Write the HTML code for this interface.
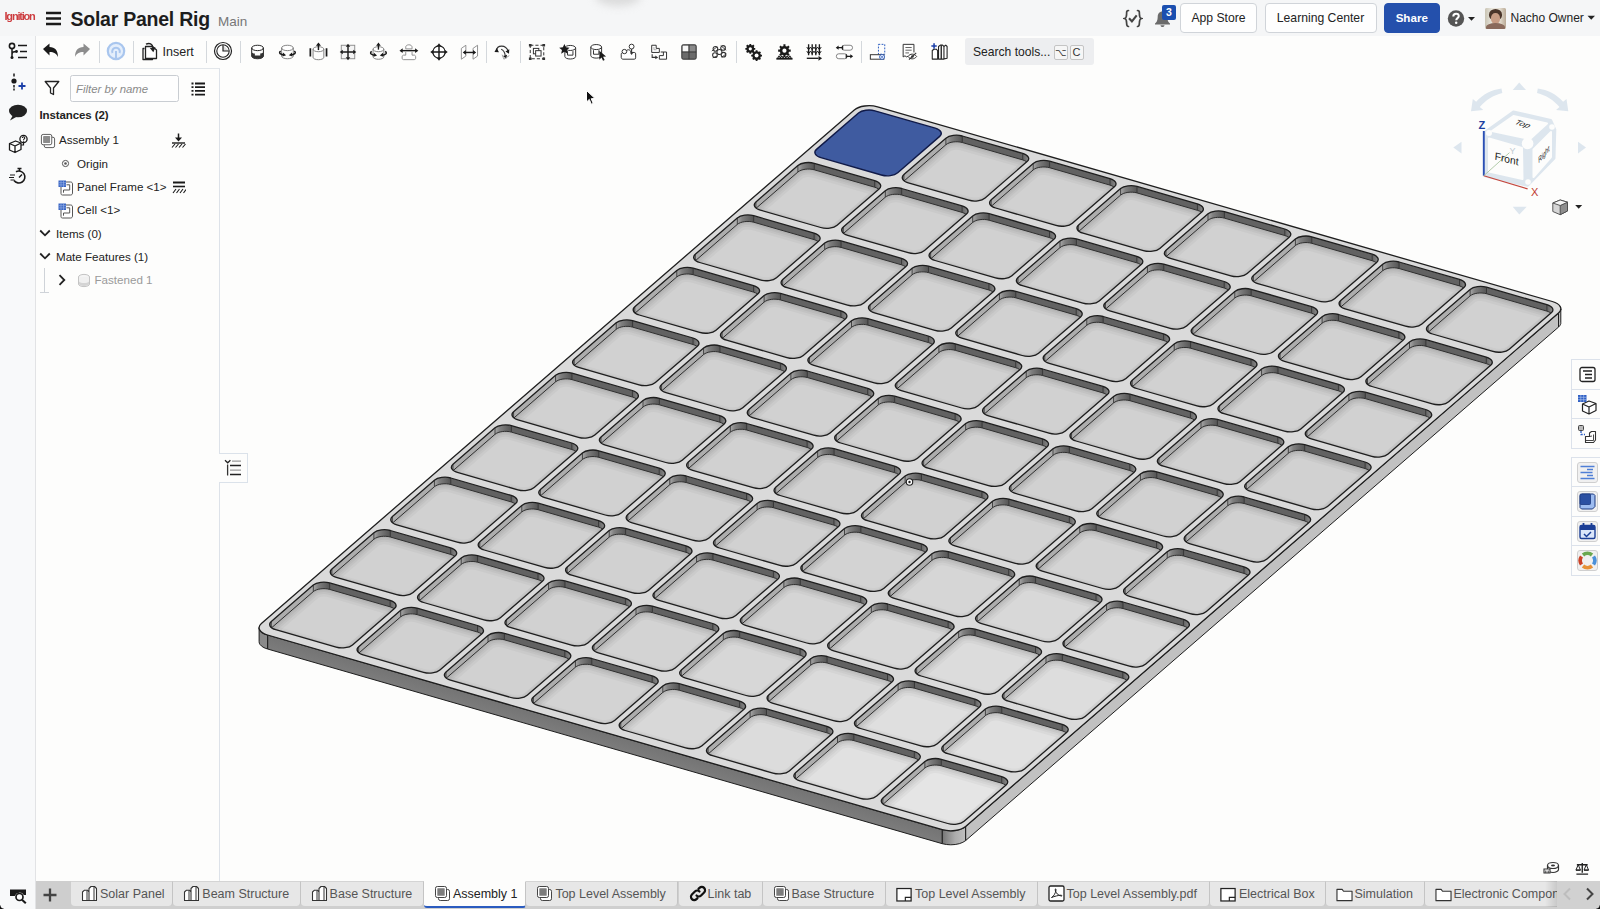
<!DOCTYPE html>
<html lang="en">
<head>
<meta charset="utf-8">
<title>Solar Panel Rig</title>
<style>
*{box-sizing:border-box}
html,body{margin:0;padding:0}
body{width:1600px;height:909px;overflow:hidden;background:#fdfdfc;font-family:"Liberation Sans",sans-serif;color:#222;position:relative}
.abs{position:absolute}
#hdr{position:absolute;left:0;top:0;width:1600px;height:36px;background:#f5f6f7}
#lcol{position:absolute;left:0;top:36px;width:36px;height:873px;background:#f8f9fa;border-right:1px solid #e2e3e5}
#tbar{position:absolute;left:36px;top:36px;width:1564px;height:32px;background:#fdfdfc}
#fpanel{position:absolute;left:36px;top:68px;width:184px;height:813px;background:#fdfdfc;border-right:1px solid #dde2e9;border-top:1px solid #e2e6ea}
#tabs{position:absolute;left:36px;top:881px;width:1564px;height:28px;background:#cecece}
.t{position:absolute;white-space:nowrap;line-height:1}
.btn{position:absolute;top:3px;height:29.5px;border:1px solid #d0d4d9;border-radius:4px;background:#fefefe;font-size:12.2px;line-height:28px;text-align:center;color:#222}
.tab{position:absolute;top:0;height:25px;background:#e7e7e7;border-radius:0 0 4px 4px;border-right:1px solid #c4c4c4;border-top:1px solid #d4d4d4;font-size:12.5px;color:#555;line-height:25px;white-space:nowrap;overflow:hidden}
.tab svg{position:absolute;left:10px;top:3px}
.tab span{position:absolute;left:29px;top:0}
.sep{position:absolute;top:41px;width:1px;height:22px;background:#d4d8dc}
.ico{position:absolute}
.row{position:absolute;font-size:11.6px;line-height:14px;white-space:nowrap;color:#222}
.rbox{position:absolute;left:1571px;width:30px;background:#fdfdfc;border:1px solid #dce2eb}
.rbox div{height:29.6px;border-bottom:1px solid #dce2eb;position:relative}
</style>
</head>
<body>
<div id="hdr">
  <div class="abs" style="left:595px;top:-14px;width:46px;height:20px;border-radius:50%;background:#d2d2d2;filter:blur(4px);opacity:.75"></div>
  <div class="t" style="left:4.5px;top:10.4px;font-size:11px;font-weight:bold;color:#cd3d40;letter-spacing:-1.2px;transform:scaleY(1.06);transform-origin:0 0">Ignition</div>
  <svg class="ico" style="left:46px;top:11px" width="16" height="15" viewBox="0 0 16 15"><path d="M0 2h15M0 7.5h15M0 13h15" stroke="#1a1a1a" stroke-width="2.3"/></svg>
  <div class="t" style="left:70.5px;top:9.5px;font-size:19.5px;font-weight:bold;color:#1d1d1d;letter-spacing:-0.25px">Solar Panel Rig</div>
  <div class="t" style="left:218px;top:14.5px;font-size:13.5px;color:#777">Main</div>

  <svg class="ico" style="left:1123px;top:9px" width="20" height="19" viewBox="0 0 20 19"><path d="M5.5 1.5C3.5 1.5 3.6 3 3.6 5c0 2.5-.2 4-2 4.5 1.8.5 2 2 2 4.5 0 2 0 3.5 1.9 3.5M14.5 1.5c2 0 1.9 1.5 1.9 3.5 0 2.5.2 4 2 4.5-1.8.5-2 2-2 4.5 0 2 0 3.5-1.9 3.5" fill="none" stroke="#444" stroke-width="1.7" stroke-linecap="round"/><path d="M6 9.3l2.900 3 4.800-6" fill="none" stroke="#444" stroke-width="2.1"/></svg>
  <svg class="ico" style="left:1154px;top:11px" width="17" height="16" viewBox="0 0 17 16"><path d="M8.5 0.5c3.3 0 4.8 2.4 4.8 5.5 0 3.5 1.2 5.5 2.7 6.5v1h-15v-1c1.5-1 2.7-3 2.7-6.5 0-3.1 1.5-5.5 4.8-5.5zM6.5 14.2h4c0 1-.9 1.8-2 1.8s-2-.8-2-1.8z" fill="#6b6b6b"/></svg>
  <div class="abs" style="left:1162px;top:5px;width:14px;height:14.5px;background:#1b4fb0;border-radius:2px;color:#fff;font-size:10.5px;font-weight:bold;text-align:center;line-height:14px">3</div>
  <div class="btn" style="left:1180px;width:77px">App Store</div>
  <div class="btn" style="left:1264.5px;width:112px">Learning Center</div>
  <div class="btn" style="left:1384px;width:55.5px;background:#2450ac;border-color:#2450ac;color:#fff;font-weight:bold;font-size:11.6px">Share</div>
  <svg class="ico" style="left:1447px;top:9px" width="32" height="19" viewBox="0 0 32 19"><circle cx="9" cy="9.5" r="8.2" fill="#555"/><path d="M6.3 7.4c0-1.7 1.2-2.7 2.8-2.7s2.7 1 2.7 2.4c0 2-2.6 2.1-2.6 4.1" fill="none" stroke="#fff" stroke-width="2"/><circle cx="9.2" cy="13.8" r="1.250" fill="#fff"/><path d="M21 8h7l-3.5 3.8z" fill="#222"/></svg>
  <div class="abs" style="left:1484.5px;top:8px;width:21px;height:21px;border-radius:2px;overflow:hidden;background:#d9d3c4">
    <div class="abs" style="left:0;top:0;width:21px;height:21px;background:linear-gradient(90deg,#c9c4b4,#ebe8df 35%,#e4ddd0 70%,#b9a995)"></div>
    <div class="abs" style="left:4px;top:1px;width:13px;height:11px;border-radius:50% 50% 40% 40%;background:#4a352a"></div>
    <div class="abs" style="left:6px;top:5px;width:9.5px;height:11px;border-radius:45%;background:#c79c84"></div>
    <div class="abs" style="left:1px;top:15px;width:19px;height:8px;border-radius:50% 50% 0 0;background:#8a6a5c"></div>
  </div>
  <div class="t" style="left:1510.5px;top:12px;font-size:12px;color:#222">Nacho Owner</div>
  <svg class="ico" style="left:1587px;top:15px" width="9" height="6" viewBox="0 0 9 6"><path d="M0.5 0.8h7.5l-3.750 4z" fill="#222"/></svg>
</div>
<div id="lcol"></div>
<div id="tbar"></div>
<div id="fpanel"></div>
<svg id="panel" width="1600" height="909" viewBox="0 0 1600 909" style="position:absolute;left:0;top:0">
<defs>
<linearGradient id="gFront" gradientUnits="userSpaceOnUse" x1="0" y1="0" x2="0" y2="15" gradientTransform="matrix(1 0.2884 0 1 0 555)"><stop offset="0" stop-color="#727272"/><stop offset="1" stop-color="#7b7b7b"/></linearGradient>
<linearGradient id="gBC" gradientUnits="userSpaceOnUse" x1="942" y1="0" x2="968" y2="0"><stop offset="0" stop-color="#747474"/><stop offset="0.5" stop-color="#acacac"/><stop offset="1" stop-color="#c4c4c4"/></linearGradient>
<linearGradient id="gTC"><stop offset="0" stop-color="#a8a8a8"/><stop offset=".3" stop-color="#808080"/><stop offset="1" stop-color="#545454"/></linearGradient>
<linearGradient id="gRC"><stop offset="0" stop-color="#626262"/><stop offset="1" stop-color="#8c8c8c"/></linearGradient>
<linearGradient id="gLC"><stop offset="0" stop-color="#8e8e8e"/><stop offset="1" stop-color="#b4b4b4"/></linearGradient>
<linearGradient id="gDW" x1="0" y1="0" x2="0" y2="1"><stop offset="0" stop-color="#575757"/><stop offset="1" stop-color="#6d6d6d"/></linearGradient>
<path id="rim" d="M10.2 6.7L70.6 24.1C76.3 25.8 78.3 29.5 75.0 32.3L33.0 68.7C29.6 71.6 22.3 72.6 16.6 70.9L-43.8 53.5C-49.6 51.9 -51.5 48.2 -48.2 45.3L-6.2 8.9C-2.9 6.1 4.5 5.1 10.2 6.7Z"/>
<clipPath id="cr"><use href="#rim"/></clipPath>
<clipPath id="cf"><use href="#rim" y="6.5"/></clipPath>
<g id="cell"><g clip-path="url(#cr)"><use href="#rim" fill="#626262"/><path d="M-6.2 8.9L-4.3 7.7L-1.8 6.7L1.1 6.1L4.2 5.9L7.3 6.1L10.2 6.7L10.2 14.2L7.3 13.6L4.2 13.4L1.1 13.6L-1.8 14.2L-4.3 15.2L-6.2 16.4Z" fill="url(#gTC)"/><path d="M-53.0 49.5L-6.2 8.9L-6.2 16.4L-53.0 57.0Z" fill="#adadad"/><path d="M-48.2 45.3L-49.4 46.8L-49.8 48.3L-49.4 49.9L-48.2 51.3L-46.3 52.6L-43.8 53.5L-43.8 61.0L-46.3 60.1L-48.2 58.8L-49.4 57.4L-49.8 55.8L-49.4 54.3L-48.2 52.8Z" fill="url(#gLC)"/><path d="M70.6 24.1L73.1 25.1L75.0 26.3L76.2 27.8L76.6 29.3L76.2 30.9L75.0 32.3L75.0 39.8L76.2 38.4L76.6 36.8L76.2 35.3L75.0 33.8L73.1 32.6L70.6 31.6Z" fill="url(#gRC)"/><use href="#rim" y="6.5" stroke="#333" stroke-width="1"/><g clip-path="url(#cf)" fill="none" stroke="#000"><use href="#rim" y="6.5" stroke-width="16" stroke-opacity="0.03"/><use href="#rim" y="6.5" stroke-width="11" stroke-opacity="0.035"/><use href="#rim" y="6.5" stroke-width="7" stroke-opacity="0.04"/><use href="#rim" y="6.5" stroke-width="3.5" stroke-opacity="0.04"/><use href="#rim" stroke-width="7" stroke-opacity="0.025"/><use href="#rim" stroke-width="3" stroke-opacity="0.03"/></g><path d="M-6.2 8.9 v6.5M10.2 6.7 v6.5M70.6 24.1 v6.5M-48.2 45.3 v6.5" stroke="#2e2e2e" stroke-width="0.8" fill="none"/></g><use href="#rim" fill="none" stroke="#1e1e1e" stroke-width="1.3"/></g>
</defs>
<path d="M267.6 635.0L942.3 829.7L942.3 843.7L267.6 649.0Z" fill="url(#gFront)" stroke="#1e1e1e" stroke-width="1" stroke-linejoin="round"/>
<path d="M965.6 826.6L1558.5 313.1L1558.5 327.1L965.6 840.6Z" fill="#c1c1c1" stroke="#1e1e1e" stroke-width="1" stroke-linejoin="round"/>
<path d="M942.3 829.7L946.4 830.5L950.8 830.8L955.2 830.5L959.3 829.7L962.9 828.3L965.6 826.6L965.6 840.6L962.9 842.3L959.3 843.7L955.2 844.5L950.8 844.8L946.4 844.5L942.3 843.7Z" fill="url(#gBC)" stroke="#1e1e1e" stroke-width="1" stroke-linejoin="round"/>
<path d="M259.1 627.7L259.3 629.2L260.1 630.6L261.4 631.9L263.1 633.2L265.2 634.2L267.6 635.0L267.6 649.0L265.2 648.2L263.1 647.2L261.4 645.9L260.1 644.6L259.3 643.2L259.1 641.7Z" fill="#8a8a8a" stroke="#1e1e1e" stroke-width="1" stroke-linejoin="round"/>
<path d="M1558.5 313.1L1559.2 312.4L1559.8 311.7L1560.2 311.0L1560.6 310.3L1560.8 309.5L1560.8 308.8L1560.8 322.8L1560.8 323.5L1560.6 324.3L1560.2 325.0L1559.8 325.7L1559.2 326.4L1558.5 327.1Z" fill="#bbbbbb" stroke="#1e1e1e" stroke-width="1" stroke-linejoin="round"/>
<path d="M877.6 106.8L1552.3 301.5C1560.5 303.8 1563.2 309.0 1558.5 313.1L965.6 826.6C960.9 830.6 950.5 832.0 942.3 829.7L267.6 635.0C259.4 632.7 256.7 627.5 261.4 623.4L854.3 109.9C859.0 105.9 869.4 104.5 877.6 106.8Z" fill="#dadada" stroke="#1e1e1e" stroke-width="1.3"/>
<use href="#rim" x="864.7" y="104.1" fill="#3f5ba0" stroke="#101a48" stroke-width="1.4"/>
<use href="#cell" x="952.1" y="129.3" fill="#d1d1d1"/>
<use href="#cell" x="1039.4" y="154.5" fill="#d1d1d1"/>
<use href="#cell" x="1126.8" y="179.7" fill="#d1d1d1"/>
<use href="#cell" x="1214.2" y="204.9" fill="#d1d1d1"/>
<use href="#cell" x="1301.6" y="230.1" fill="#d1d1d1"/>
<use href="#cell" x="1388.9" y="255.3" fill="#d1d1d1"/>
<use href="#cell" x="1476.3" y="280.5" fill="#d1d1d1"/>
<use href="#cell" x="804.1" y="156.6" fill="#d1d1d1"/>
<use href="#cell" x="891.5" y="181.8" fill="#d1d1d1"/>
<use href="#cell" x="978.9" y="207.0" fill="#d1d1d1"/>
<use href="#cell" x="1066.2" y="232.2" fill="#d1d1d1"/>
<use href="#cell" x="1153.6" y="257.4" fill="#d1d1d1"/>
<use href="#cell" x="1241.0" y="282.6" fill="#d1d1d1"/>
<use href="#cell" x="1328.3" y="307.8" fill="#d1d1d1"/>
<use href="#cell" x="1415.7" y="333.0" fill="#d1d1d1"/>
<use href="#cell" x="743.5" y="209.0" fill="#d1d1d1"/>
<use href="#cell" x="830.9" y="234.2" fill="#d1d1d1"/>
<use href="#cell" x="918.3" y="259.4" fill="#d1d1d1"/>
<use href="#cell" x="1005.6" y="284.6" fill="#d1d1d1"/>
<use href="#cell" x="1093.0" y="309.8" fill="#d1d1d1"/>
<use href="#cell" x="1180.4" y="335.0" fill="#d1d1d1"/>
<use href="#cell" x="1267.8" y="360.2" fill="#d1d1d1"/>
<use href="#cell" x="1355.1" y="385.4" fill="#d1d1d1"/>
<use href="#cell" x="683.0" y="261.5" fill="#d1d1d1"/>
<use href="#cell" x="770.3" y="286.7" fill="#d1d1d1"/>
<use href="#cell" x="857.7" y="311.9" fill="#d1d1d1"/>
<use href="#cell" x="945.1" y="337.1" fill="#d1d1d1"/>
<use href="#cell" x="1032.4" y="362.3" fill="#d1d1d1"/>
<use href="#cell" x="1119.8" y="387.5" fill="#d1d1d1"/>
<use href="#cell" x="1207.2" y="412.7" fill="#d1d1d1"/>
<use href="#cell" x="1294.5" y="437.9" fill="#d1d1d1"/>
<use href="#cell" x="622.4" y="313.9" fill="#d1d1d1"/>
<use href="#cell" x="709.8" y="339.1" fill="#d1d1d1"/>
<use href="#cell" x="797.1" y="364.3" fill="#d1d1d1"/>
<use href="#cell" x="884.5" y="389.5" fill="#d1d1d1"/>
<use href="#cell" x="971.9" y="414.7" fill="#d1d1d1"/>
<use href="#cell" x="1059.2" y="439.9" fill="#d1d1d1"/>
<use href="#cell" x="1146.6" y="465.1" fill="#d1d1d1"/>
<use href="#cell" x="1234.0" y="490.3" fill="#d1d1d1"/>
<use href="#cell" x="561.8" y="366.4" fill="#d1d1d1"/>
<use href="#cell" x="649.2" y="391.6" fill="#d1d1d1"/>
<use href="#cell" x="736.5" y="416.8" fill="#d1d1d1"/>
<use href="#cell" x="823.9" y="442.0" fill="#d1d1d1"/>
<use href="#cell" x="911.3" y="467.2" fill="#d1d1d1"/>
<use href="#cell" x="998.7" y="492.4" fill="#d3d3d3"/>
<use href="#cell" x="1086.0" y="517.6" fill="#d4d4d4"/>
<use href="#cell" x="1173.4" y="542.8" fill="#d5d5d5"/>
<use href="#cell" x="501.2" y="418.9" fill="#d1d1d1"/>
<use href="#cell" x="588.6" y="444.1" fill="#d1d1d1"/>
<use href="#cell" x="676.0" y="469.3" fill="#d1d1d1"/>
<use href="#cell" x="763.3" y="494.5" fill="#d1d1d1"/>
<use href="#cell" x="850.7" y="519.7" fill="#d3d3d3"/>
<use href="#cell" x="938.1" y="544.9" fill="#d6d6d6"/>
<use href="#cell" x="1025.4" y="570.1" fill="#d8d8d8"/>
<use href="#cell" x="1112.8" y="595.3" fill="#d9d9d9"/>
<use href="#cell" x="440.6" y="471.3" fill="#d1d1d1"/>
<use href="#cell" x="528.0" y="496.5" fill="#d1d1d1"/>
<use href="#cell" x="615.4" y="521.7" fill="#d1d1d1"/>
<use href="#cell" x="702.8" y="546.9" fill="#d2d2d2"/>
<use href="#cell" x="790.1" y="572.1" fill="#d5d5d5"/>
<use href="#cell" x="877.5" y="597.3" fill="#d9d9d9"/>
<use href="#cell" x="964.9" y="622.5" fill="#dcdcdc"/>
<use href="#cell" x="1052.2" y="647.7" fill="#dddddd"/>
<use href="#cell" x="380.1" y="523.8" fill="#d1d1d1"/>
<use href="#cell" x="467.4" y="549.0" fill="#d1d1d1"/>
<use href="#cell" x="554.8" y="574.2" fill="#d1d1d1"/>
<use href="#cell" x="642.2" y="599.4" fill="#d3d3d3"/>
<use href="#cell" x="729.5" y="624.6" fill="#d7d7d7"/>
<use href="#cell" x="816.9" y="649.8" fill="#dbdbdb"/>
<use href="#cell" x="904.3" y="675.0" fill="#dfdfdf"/>
<use href="#cell" x="991.6" y="700.2" fill="#e1e1e1"/>
<use href="#cell" x="319.5" y="576.2" fill="#d1d1d1"/>
<use href="#cell" x="406.9" y="601.4" fill="#d1d1d1"/>
<use href="#cell" x="494.2" y="626.6" fill="#d1d1d1"/>
<use href="#cell" x="581.6" y="651.8" fill="#d3d3d3"/>
<use href="#cell" x="669.0" y="677.0" fill="#d8d8d8"/>
<use href="#cell" x="756.3" y="702.2" fill="#dcdcdc"/>
<use href="#cell" x="843.7" y="727.4" fill="#e1e1e1"/>
<use href="#cell" x="931.1" y="752.6" fill="#e5e5e5"/>
<circle cx="909.5" cy="482" r="3.2" fill="#fff" stroke="#222" stroke-width="1.1"/><circle cx="909.5" cy="482" r="1.2" fill="#222"/>
</svg><!-- left column icons -->
<svg class="ico" style="left:8px;top:42px" width="20" height="19" viewBox="0 0 20 19"><circle cx="4" cy="4" r="2.6" fill="#fff" stroke="#1a1a1a" stroke-width="1.6"/><circle cx="4" cy="15.5" r="1.5" fill="#1a1a1a"/><path d="M4 6.5v9M4 13c0-3 1-3.5 4.5-3.5" fill="none" stroke="#1a1a1a" stroke-width="1.5"/><circle cx="8.5" cy="9.5" r="1.4" fill="#1a1a1a"/><path d="M10 3.5h9M12 9.5h7M10 15.5h9" stroke="#1a1a1a" stroke-width="1.7"/></svg>
<svg class="ico" style="left:9px;top:73px" width="20" height="19" viewBox="0 0 20 19"><path d="M5 0.5v3M5 12v2.5M5 15.5v2" stroke="#1a1a1a" stroke-width="1.5"/><circle cx="5" cy="8" r="2.6" fill="#1a1a1a"/><path d="M9.5 13h7M13 9.5v7" stroke="#1b3fa8" stroke-width="1.8"/></svg>
<svg class="ico" style="left:8px;top:104px" width="20" height="18" viewBox="0 0 20 18"><ellipse cx="10" cy="7" rx="9" ry="6.3" fill="#222"/><path d="M5 11l-3 5.5 7-4z" fill="#222"/></svg>
<svg class="ico" style="left:8px;top:134px" width="21" height="21" viewBox="0 0 21 21"><path d="M1.5 9.5l6-2.5 5.5 2v6.5l-6 3-5.5-2.5zM1.5 9.5l5.5 2.5 6-3M7 12v6.5" fill="#fff" stroke="#1a1a1a" stroke-width="1.3" stroke-linejoin="round"/><circle cx="15.5" cy="5" r="3.6" fill="#fff" stroke="#1a1a1a" stroke-width="1.3"/><path d="M14.3 4c0-1.7 2.5-1.7 2.5 0 0 .9-1.2 1-1.2 2" fill="none" stroke="#1a1a1a" stroke-width="1.1"/><circle cx="15.6" cy="7.2" r=".6" fill="#1a1a1a"/><path d="M15.5 8.6v2.4h-2.5" fill="none" stroke="#1a1a1a" stroke-width="1.2"/></svg>
<svg class="ico" style="left:8px;top:166px" width="21" height="21" viewBox="0 0 21 21"><path d="M6 14.5a6 6 0 1 0 2-8.8" fill="none" stroke="#1a1a1a" stroke-width="1.6"/><path d="M9.5 2.5h4M11.5 2.5v2.5M11 11.5l3-3" stroke="#1a1a1a" stroke-width="1.5"/><path d="M2 9h5M1 11.5h5M2.5 14h4" stroke="#1a1a1a" stroke-width="1.1"/></svg>
<svg class="ico" style="left:9px;top:888px" width="19" height="16" viewBox="0 0 19 16"><path d="M1 1.5h16v5.5h-2.2a5 5 0 0 0-9 1h-4.8z" fill="#1a1a1a"/><circle cx="10.5" cy="9" r="3.5" fill="#fff" stroke="#1a1a1a" stroke-width="1.7"/><path d="M13 11.7l3.8 3.6" stroke="#1a1a1a" stroke-width="2"/></svg>
<div class="abs" style="left:0;top:905px;width:4px;height:4px;background:radial-gradient(circle at 100% 0,rgba(17,17,17,0) 3.3px,#111 4px)"></div>

<!-- toolbar -->
<svg class="ico" style="left:42px;top:43px" width="18" height="16" viewBox="0 0 18 16"><path d="M1 6l6.5-5.5v3.5c5.5 0 8.5 3.5 8.5 10-1.5-3.5-4-5-8.5-5v3.5z" fill="#1a1a1a"/></svg>
<svg class="ico" style="left:73px;top:43px" width="18" height="16" viewBox="0 0 18 16"><path d="M17 6l-6.5-5.5v3.5c-5.5 0-8.5 3.5-8.5 10 1.5-3.5 4-5 8.5-5v3.5z" fill="#8d8d8d"/></svg>
<div class="sep" style="left:98.5px"></div>
<svg class="ico" style="left:106px;top:41px" width="20" height="20" viewBox="0 0 20 20"><circle cx="10" cy="10" r="8.2" fill="#e4eefb" stroke="#a9c6ee" stroke-width="2.2"/><path d="M10 17v-7M6.5 12a3.8 3.8 0 1 1 7 0" fill="none" stroke="#a9c6ee" stroke-width="2"/></svg>
<div class="sep" style="left:132.8px"></div>
<svg class="ico" style="left:141px;top:42px" width="18" height="19" viewBox="0 0 18 19"><path d="M3.5 6.5h-1.5v11h9.5v-1.5" fill="none" stroke="#222" stroke-width="1.3" stroke-linejoin="round"/><path d="M4.5 4.5h7l4 3.5v8.5h-11z" fill="#fff" stroke="#222" stroke-width="1.3" stroke-linejoin="round"/><path d="M5 2.2c3.5-1.7 6.5-.5 7 3.8" fill="none" stroke="#222" stroke-width="1.5"/><path d="M8.8 6l3.5 4.2 2.2-5z" fill="#222"/></svg>
<div class="t" style="left:162.5px;top:45.5px;font-size:12.5px;color:#222">Insert</div>
<div class="sep" style="left:205.8px"></div>
<svg class="ico" style="left:213px;top:41px" width="20" height="20" viewBox="0 0 20 20"><circle cx="10" cy="10" r="8.5" fill="#fff" stroke="#222" stroke-width="1.2"/><circle cx="10" cy="10" r="6.2" fill="none" stroke="#222" stroke-width="1.1"/><path d="M10 4v6h6" fill="#ddd" stroke="#222" stroke-width="1.2"/></svg>
<div class="sep" style="left:240px"></div>

<!-- mate icons -->
<svg class="ico" style="left:248.9px;top:42.8px" width="17.1" height="18.0" viewBox="0 0 19 20"><ellipse cx="9.5" cy="5.5" rx="6.5" ry="3" fill="#fff" stroke="#222" stroke-width="1.1"/><path d="M3 5.5v9c0 1.7 3 3 6.5 3s6.5-1.3 6.5-3v-9" fill="none" stroke="#222" stroke-width="1.1"/><path d="M3 10.5c1.5 1 3 1.2 3.5 1.2v2.3h6v-2.3c1 0 2.5-.4 3.5-1.2v4.5c-.5 1.5-3 2.5-6.5 2.5s-6-1-6.5-2.5z" fill="#333"/></svg>
<svg class="ico" style="left:278.1px;top:42.8px" width="18.9" height="18.0" viewBox="0 0 21 20"><ellipse cx="10.5" cy="5.5" rx="6.5" ry="3" fill="#fff" stroke="#777" stroke-width="1"/><path d="M4 5.5v9c0 1.7 3 3 6.5 3s6.5-1.3 6.5-3v-9" fill="none" stroke="#777" stroke-width="1"/><path d="M3 9c-3 2 0 4 4 4.5M18 9c3 2 0 4-4 4.5" fill="none" stroke="#1a1a1a" stroke-width="1.6"/><path d="M5.5 10.5l3.5 3-4 1.5zM15.5 10.5l-3.5 3 4 1.5z" fill="#1a1a1a"/></svg>
<svg class="ico" style="left:309.1px;top:41.8px" width="18.9" height="18.9" viewBox="0 0 21 21"><ellipse cx="10.5" cy="8" rx="6" ry="2.8" fill="#fff" stroke="#777" stroke-width="1"/><path d="M4.5 8v9c0 1.5 2.7 2.7 6 2.7s6-1.2 6-2.7v-9" fill="none" stroke="#777" stroke-width="1"/><path d="M10.5 9v-6" stroke="#1a1a1a" stroke-width="1.6"/><path d="M10.5 0.5l-2.8 3.8h5.6z" fill="#1a1a1a"/><path d="M1.5 7v9M19.5 7v9" stroke="#1a1a1a" stroke-width="1.9"/></svg>
<svg class="ico" style="left:339.0px;top:42.8px" width="18.0" height="18.0" viewBox="0 0 20 20"><rect x="2.5" y="2.5" width="15" height="15" fill="#f4f4f4" stroke="#888" stroke-width="1"/><path d="M10 3.5v13M3.5 10h13" stroke="#1a1a1a" stroke-width="1.6"/><path d="M10 0.8l-2.5 3.4h5zM10 19.2l-2.5-3.4h5zM0.8 10l3.4-2.5v5zM19.2 10l-3.4-2.5v5z" fill="#1a1a1a"/></svg>
<svg class="ico" style="left:369.1px;top:41.8px" width="18.9" height="18.9" viewBox="0 0 21 21"><ellipse cx="10.5" cy="8" rx="6" ry="2.8" fill="#fff" stroke="#777" stroke-width="1"/><path d="M4.5 8v8.5c0 1.5 2.7 2.7 6 2.7s6-1.2 6-2.7v-8.5" fill="none" stroke="#777" stroke-width="1"/><path d="M10.5 8.5v-5" stroke="#1a1a1a" stroke-width="1.5"/><path d="M10.5 0.5l-2.6 3.6h5.2z" fill="#1a1a1a"/><path d="M3 10.5c-3 2 0 4 4 4.5M18 10.5c3 2 0 4-4 4.5" fill="none" stroke="#1a1a1a" stroke-width="1.6"/><path d="M5.5 12l3.5 3-4 1.5zM15.5 12l-3.5 3 4 1.5z" fill="#1a1a1a"/></svg>
<svg class="ico" style="left:399.1px;top:42.8px" width="19.8" height="18.0" viewBox="0 0 22 20"><path d="M7.5 4.5c0-1.5 1.5-2.5 3.5-2.5s3.5 1 3.5 2.5v2h-7zM7.5 10v3.5h-2.5c-1 0-1.5 1-1.5 2v1.5c0 .8.5 1.5 1.5 1.5h12c1 0 1.5-.7 1.5-1.5v-1.5c0-1-.5-2-1.5-2h-2.5v-3.5" fill="#fff" stroke="#888" stroke-width="1"/><path d="M3 8.5h16" stroke="#1a1a1a" stroke-width="1.6"/><path d="M0.5 8.5l3.6-2.6v5.2zM21.5 8.5l-3.6-2.6v5.2z" fill="#1a1a1a"/></svg>
<svg class="ico" style="left:430.0px;top:42.8px" width="18.0" height="18.0" viewBox="0 0 20 20"><circle cx="10" cy="10" r="6.8" fill="#fff" stroke="#1a1a1a" stroke-width="1.2"/><path d="M10 3v14M3 10h14" stroke="#1a1a1a" stroke-width="1.6"/><path d="M10 0.3l-2.5 3.4h5zM10 19.7l-2.5-3.4h5zM0.3 10l3.4-2.5v5zM19.7 10l-3.4-2.5v5z" fill="#1a1a1a"/></svg>
<svg class="ico" style="left:460.1px;top:42.8px" width="18.9" height="18.0" viewBox="0 0 21 20"><path d="M1.5 6l5-3.5v12l-5 3.5zM14.5 6l5-3.5v12l-5 3.5z" fill="#fff" stroke="#888" stroke-width="1"/><path d="M5 10.5h11" stroke="#1a1a1a" stroke-width="1.6"/><path d="M3 10.5l3.5-2.6v5.2zM18 10.5l-3.5-2.6v5.2z" fill="#1a1a1a"/></svg>
<div class="sep" style="left:486.2px"></div>
<svg class="ico" style="left:494.1px;top:42.8px" width="18.9" height="18.0" viewBox="0 0 21 20"><path d="M3 8.5c0-3 2-5 5.5-5M8.5 3.5c3 0 6 2 7.5 6M8 7c2.5 1 4 3.5 4.5 7" fill="none" stroke="#333" stroke-width="1.2"/><path d="M3 5.5l-2.5 4.5 5 .3zM17 7l-.3 5-4-2.5zM14.5 13l-1 4.5-3.5-3z" fill="#1a1a1a"/><path d="M9 13l2 5 6-4" fill="none" stroke="#999" stroke-width="1"/></svg>
<div class="sep" style="left:519.8px"></div>
<svg class="ico" style="left:528.0px;top:42.8px" width="18.0" height="18.0" viewBox="0 0 20 20"><rect x="2.5" y="2.5" width="15" height="15" fill="none" stroke="#333" stroke-width="1.1" stroke-dasharray="3.5 2.2"/><rect x="6" y="6" width="6" height="6" fill="#fff" stroke="#333" stroke-width="1.1"/><rect x="8.5" y="8.5" width="6" height="6" fill="#fff" stroke="#333" stroke-width="1.1"/><path d="M1 1h3v3h-3zM16 1h3v3h-3zM1 16h3v3h-3zM16 16h3v3h-3z" fill="#333"/></svg>
<svg class="ico" style="left:559.0px;top:42.8px" width="18.9" height="18.0" viewBox="0 0 21 20"><path d="M6.5 5.5v9.5c0 1.6 2.7 2.8 6 2.8s6-1.2 6-2.8v-9.5" fill="#fff" stroke="#333" stroke-width="1.1"/><ellipse cx="12.5" cy="5.5" rx="6" ry="2.8" fill="#fff" stroke="#333" stroke-width="1.1"/><path d="M9.5 9v4.5h6v-4.5" fill="none" stroke="#333" stroke-width="1.1"/><path d="M6 1l1.7 3.8 4.1.4-3.1 2.7.9 4-3.6-2.1-3.6 2.1.9-4-3.1-2.7 4.1-.4z" fill="#1a1a1a"/></svg>
<svg class="ico" style="left:589.0px;top:42.8px" width="18.9" height="18.0" viewBox="0 0 21 20"><path d="M2 4.5v9.5c0 1.6 2.7 2.8 6 2.8s6-1.2 6-2.8v-9.5" fill="#fff" stroke="#333" stroke-width="1.1"/><ellipse cx="8" cy="4.5" rx="6" ry="2.8" fill="#fff" stroke="#333" stroke-width="1.1"/><path d="M5 8v4.5h6v-4.5" fill="none" stroke="#333" stroke-width="1.1"/><path d="M11.5 8.5l7.5 6.5-3.4.3 1.8 3.7-1.8.8-1.7-3.7-2.4 2.4z" fill="#1a1a1a"/></svg>
<svg class="ico" style="left:619.0px;top:42.8px" width="18.9" height="18.0" viewBox="0 0 21 20"><path d="M2.5 12.5c0-1 .7-2 2-2h3.5c0-2 1-3 2.5-3s2.5 1 2.5 3h4c1 0 1.5.7 1.5 1.5v4.5c0 1-.5 1.5-1.5 1.5h-12.5c-1.3 0-2-1-2-2z" fill="#fff" stroke="#333" stroke-width="1.1"/><ellipse cx="6" cy="9.5" rx="2.6" ry="2.4" fill="#fff" stroke="#333" stroke-width="1.1"/><circle cx="14" cy="4" r="2.7" fill="#fff" stroke="#333" stroke-width="1.1"/><path d="M14 6.7v4.5" stroke="#333" stroke-width="1.2"/><path d="M12.2 10.8l1.8 2.6 1.8-2.6z" fill="#333"/></svg>
<svg class="ico" style="left:649.1px;top:42.8px" width="19.8" height="18.0" viewBox="0 0 22 20"><path d="M3 2.5h5v3.5h3.5v4.5h-8.5z" fill="#fff" stroke="#333" stroke-width="1.1" stroke-linejoin="round"/><path d="M13 10h6.5v8h-8v-4h4.5v-4" fill="#fff" stroke="#333" stroke-width="1.1" stroke-linejoin="round"/><path d="M3.5 12.5v3.5h4.5" fill="none" stroke="#333" stroke-width="1.2"/><path d="M7 14l3.2 2-3.2 2z" fill="#333"/><path d="M5.5 4.5v3h3" fill="none" stroke="#999" stroke-width=".9"/></svg>
<svg class="ico" style="left:680.0px;top:42.8px" width="18.0" height="18.0" viewBox="0 0 20 20"><rect x="2" y="2" width="16" height="16" rx="1.5" fill="#6a6a6a" stroke="#333" stroke-width="1.1"/><rect x="3" y="3" width="6.5" height="6.5" fill="#f6f6f6"/><rect x="10.5" y="3" width="6.5" height="6.5" fill="#8a8a8a"/><path d="M10 2v16M2 10h16" stroke="#333" stroke-width="1"/></svg>
<svg class="ico" style="left:710.0px;top:42.8px" width="18.9" height="18.0" viewBox="0 0 21 20"><g fill="#fff" stroke="#333" stroke-width="1.2"><circle cx="6" cy="6.5" r="2.6"/><circle cx="14.5" cy="5.5" r="2.6"/><circle cx="5.5" cy="13.5" r="2.6"/><circle cx="15" cy="13" r="2.6"/><circle cx="10.5" cy="10" r="2.8"/></g><path d="M2 9l6-5M12 3l6 5M3 16.5l5-2M13 16l5-4" stroke="#333" stroke-width="1"/></svg>
<div class="sep" style="left:735.8px"></div>
<svg class="ico" style="left:744.0px;top:42.8px" width="18.9" height="18.0" viewBox="0 0 21 20"><g fill="#1a1a1a"><circle cx="7" cy="6.5" r="4.3"/><circle cx="14" cy="14" r="4.8"/></g><g stroke="#1a1a1a" stroke-width="2"><path d="M7 1v11M1.5 6.5h11M3 2.5l8 8M11 2.5l-8 8"/><path d="M14 8v12M8 14h12M9.8 9.8l8.4 8.4M18.2 9.8l-8.4 8.4"/></g><circle cx="7" cy="6.5" r="1.8" fill="#fff"/><circle cx="14" cy="14" r="2.2" fill="#fff"/></svg>
<svg class="ico" style="left:775.0px;top:42.8px" width="18.9" height="18.0" viewBox="0 0 21 20"><circle cx="10.5" cy="8.5" r="5.2" fill="#1a1a1a"/><g stroke="#1a1a1a" stroke-width="2.3"><path d="M10.5 1.5v14M3.5 8.5h14M5.5 3.5l10 10M15.5 3.5l-10 10"/></g><circle cx="10.5" cy="8.5" r="2.3" fill="#fff"/><path d="M1.5 17.5h18" stroke="#1a1a1a" stroke-width="2"/><path d="M3 16.5l1.5-2 1.5 2 1.5-2 1.5 2 1.5-2 1.5 2 1.5-2 1.5 2 1.5-2 1.5 2" fill="none" stroke="#1a1a1a" stroke-width="1.2"/></svg>
<svg class="ico" style="left:805.0px;top:42.8px" width="18.9" height="18.0" viewBox="0 0 21 20"><path d="M4 1.5v12M8 1.5v12M12 1.5v12M16 1.5v12" stroke="#1a1a1a" stroke-width="1.5"/><path d="M2 4.5l2 3 2-3 2 3 2-3 2 3 2-3 2 3 2-3M2 9l2 3 2-3 2 3 2-3 2 3 2-3 2 3 2-3" fill="none" stroke="#1a1a1a" stroke-width="1.1"/><path d="M2 17h13" stroke="#1a1a1a" stroke-width="1.5"/><path d="M19 17l-4-2.6v5.2z" fill="#1a1a1a"/></svg>
<svg class="ico" style="left:835.0px;top:42.8px" width="18.9" height="18.0" viewBox="0 0 21 20"><rect x="7.5" y="2.5" width="12" height="5.5" rx="2.7" fill="#fff" stroke="#777" stroke-width="1"/><rect x="1.5" y="12" width="12" height="5.5" rx="2.7" fill="#fff" stroke="#777" stroke-width="1"/><path d="M2.5 5.2h6M12.5 14.8h6" stroke="#1a1a1a" stroke-width="1.5"/><path d="M0.8 5.2l3.2-2.3v4.6zM20.2 14.8l-3.2-2.3v4.6z" fill="#1a1a1a"/><path d="M8.5 3v4.5M12.5 12.5v4.5" stroke="#1a1a1a" stroke-width="1.3"/></svg>
<div class="sep" style="left:861.3px"></div>
<svg class="ico" style="left:869.0px;top:42.8px" width="18.9" height="18.0" viewBox="0 0 21 20"><rect x="10.5" y="1.5" width="7" height="11" fill="none" stroke="#2b5cc0" stroke-width="1.1" stroke-dasharray="2 1.5"/><rect x="1.5" y="13" width="15" height="5" fill="#fff" stroke="#333" stroke-width="1.1"/><circle cx="14.5" cy="15.5" r="2.7" fill="#fff" stroke="#2b5cc0" stroke-width="1.1"/><circle cx="14.5" cy="15.5" r="1" fill="#2b5cc0"/></svg>
<svg class="ico" style="left:900.0px;top:42.8px" width="18.9" height="18.0" viewBox="0 0 21 20"><path d="M3.5 1.5h12v9M3.5 1.5v14l2-1.2 2 1.2 1.5-1" fill="none" stroke="#333" stroke-width="1.1"/><path d="M6 5h7M6 8h7M6 11h4" stroke="#555" stroke-width="1"/><path d="M9 15c2-3.5 7-3.5 9.5 0-2.5 3.5-7.5 3.5-9.5 0z" fill="#fff" stroke="#333" stroke-width="1.1"/><circle cx="13.8" cy="15" r="1.5" fill="#333"/><path d="M10 18.5l8-7.5" stroke="#333" stroke-width="1.2"/></svg>
<svg class="ico" style="left:930.0px;top:41.8px" width="18.9" height="18.9" viewBox="0 0 21 21"><path d="M2.5 9.5l2-1.5h2.5l1.5 1.5v9.5h-6zM9.5 5l2-1.5h2.5l1.5 1.5v14h-6zM15.5 5l2-1.5 1.5 1.5v13l-3.5 1z" fill="#fff" stroke="#222" stroke-width="1.2" stroke-linejoin="round"/><path d="M12.5 3.5v15.5" stroke="#222" stroke-width="1.5"/><path d="M1.5 4.5h6M4.5 1.5v6" stroke="#1b3fa8" stroke-width="1.7"/></svg>
<div class="abs" style="left:964.5px;top:38px;width:129px;height:27px;background:#edeef0;border-radius:3px"></div>
<div class="t" style="left:973px;top:45.5px;font-size:12.1px;color:#222">Search tools...</div>
<div class="abs" style="left:1054px;top:44.5px;width:14px;height:15px;border:1px solid #c4c4c4;border-radius:2px;background:#f6f6f6;font-size:10px;line-height:13px;text-align:center;color:#333">⌥</div>
<div class="abs" style="left:1069.5px;top:44.5px;width:14px;height:15px;border:1px solid #c4c4c4;border-radius:2px;background:#f6f6f6;font-size:11px;line-height:13px;text-align:center;color:#333">C</div>
<!-- feature panel -->
<svg class="ico" style="left:44px;top:80px" width="16" height="17" viewBox="0 0 16 17"><path d="M1.2 1.5h13.6l-5.3 6.5v6.5l-3-1.5v-5z" fill="none" stroke="#222" stroke-width="1.3" stroke-linejoin="round"/></svg>
<div class="abs" style="left:70px;top:75px;width:109px;height:26.5px;border:1px solid #c9cdd2;border-radius:2.5px;background:#fefefe"></div>
<div class="t" style="left:76px;top:83.5px;font-size:11.4px;font-style:italic;color:#8a8a8a">Filter by name</div>
<svg class="ico" style="left:191px;top:81px" width="15" height="15" viewBox="0 0 15 15"><path d="M0.5 2.5h2M0.5 6.2h2M0.5 9.9h2M0.5 13.6h2" stroke="#1a1a1a" stroke-width="1.8"/><path d="M4 2.5h10M4 6.2h10M4 9.9h10M4 13.6h10" stroke="#1a1a1a" stroke-width="1.8"/></svg>
<div class="row" style="left:39.5px;top:108.0px;font-weight:bold;font-size:11.5px;color:#222;letter-spacing:-.1px">Instances (2)</div>

<svg class="ico" style="left:40px;top:133px" width="16" height="16" viewBox="0 0 17 17"><rect x="4.5" y="4.5" width="11" height="11" rx="1.8" fill="#fff" stroke="#555" stroke-width="1"/><rect x="1.5" y="1.5" width="11" height="11" rx="1.8" fill="#fff" stroke="#555" stroke-width="1"/><rect x="3.3" y="3.3" width="7.4" height="7.4" rx=".5" fill="#8c8c8c"/></svg>
<div class="row" style="left:59px;top:133.0px">Assembly 1</div>
<svg class="ico" style="left:171px;top:133px" width="15" height="15" viewBox="0 0 15 15"><path d="M7.5 0.5v6" stroke="#1a1a1a" stroke-width="1.5"/><path d="M4 4.5l3.5 4 3.5-4z" fill="#1a1a1a"/><path d="M1 10h13" stroke="#1a1a1a" stroke-width="1.4"/><path d="M1 14.5l3-3.5M4.5 14.5l3-3.5M8 14.5l3-3.5M11.5 14.5l3-3.5" stroke="#1a1a1a" stroke-width="1.1"/></svg>

<svg class="ico" style="left:61px;top:159px" width="9" height="9" viewBox="0 0 9 9"><circle cx="4.5" cy="4.5" r="3.1" fill="#fff" stroke="#555" stroke-width="1"/><circle cx="4.5" cy="4.5" r="1.3" fill="#555"/></svg>
<div class="row" style="left:77px;top:156.5px">Origin</div>

<svg class="ico" style="left:58.3px;top:179.5px" width="16" height="16" viewBox="0 0 16 16"><path d="M3 7v6.5c0 1 .5 1.5 1.5 1.5h8c1.3 0 2-.7 2-2v-9c0-1.3-.7-2-2-2h-5" fill="#fff" stroke="#555" stroke-width="1"/><path d="M8.5 4.8h3.2v5.2h-6.2v2.7" fill="none" stroke="#555" stroke-width="1"/><rect x=".5" y=".5" width="7.5" height="6.5" fill="#3a66c4"/><path d="M.5 2.7h7.5M.5 4.9h7.5M3 .5v6.5M5.5 .5v6.5" stroke="#9bb6ea" stroke-width=".6"/></svg>
<div class="row" style="left:77px;top:180.0px">Panel Frame &lt;1&gt;</div>
<svg class="ico" style="left:172px;top:181px" width="14" height="13" viewBox="0 0 14 13"><path d="M1 1.5h12" stroke="#1a1a1a" stroke-width="2"/><path d="M1 5.5h12" stroke="#1a1a1a" stroke-width="1.6"/><path d="M1 12l3-4M4.5 12l3-4M8 12l3-4M11.5 12l2.5-3.5" stroke="#1a1a1a" stroke-width="1.1"/></svg>

<svg class="ico" style="left:58.3px;top:202.8px" width="16" height="16" viewBox="0 0 16 16"><path d="M3 7v6.5c0 1 .5 1.5 1.5 1.5h8c1.3 0 2-.7 2-2v-9c0-1.3-.7-2-2-2h-5" fill="#fff" stroke="#555" stroke-width="1"/><path d="M8.5 4.8h3.2v5.2h-6.2v2.7" fill="none" stroke="#555" stroke-width="1"/><rect x=".5" y=".5" width="7.5" height="6.5" fill="#3a66c4"/><path d="M.5 2.7h7.5M.5 4.9h7.5M3 .5v6.5M5.5 .5v6.5" stroke="#9bb6ea" stroke-width=".6"/></svg>
<div class="row" style="left:77px;top:203.0px">Cell &lt;1&gt;</div>

<svg class="ico" style="left:39px;top:229px" width="12" height="8" viewBox="0 0 12 8"><path d="M1.2 1.5l4.8 4.8 4.8-4.8" fill="none" stroke="#222" stroke-width="1.8"/></svg>
<div class="row" style="left:56px;top:226.5px">Items (0)</div>
<svg class="ico" style="left:39px;top:252px" width="12" height="8" viewBox="0 0 12 8"><path d="M1.2 1.5l4.8 4.8 4.8-4.8" fill="none" stroke="#222" stroke-width="1.8"/></svg>
<div class="row" style="left:56px;top:249.5px">Mate Features (1)</div>
<div class="abs" style="left:44px;top:268px;width:1px;height:24px;background:#cfd3d8"></div>
<div class="abs" style="left:40px;top:291.5px;width:9px;height:1px;background:#cfd3d8"></div>
<svg class="ico" style="left:58px;top:274px" width="8" height="12" viewBox="0 0 8 12"><path d="M1.5 1.2l4.8 4.8-4.8 4.8" fill="none" stroke="#222" stroke-width="1.8"/></svg>
<svg class="ico" style="left:77px;top:273px" width="14" height="15" viewBox="0 0 14 15"><ellipse cx="7" cy="4" rx="5.5" ry="2.6" fill="#f4f4f4" stroke="#c4c4c4" stroke-width="1"/><path d="M1.5 4v7c0 1.5 2.5 2.6 5.5 2.6s5.5-1.1 5.5-2.6v-7" fill="#f0f0f0" stroke="#c4c4c4" stroke-width="1"/><path d="M2 8.5c1 1 3 1.5 5 1.5s4-.5 5-1.5v2.5c-.5 1.2-2.5 2-5 2s-4.5-.8-5-2z" fill="#d4d4d4"/></svg>
<div class="row" style="left:94.5px;top:273.0px;color:#9a9a9a">Fastened 1</div>

<!-- panel collapse handle -->
<div class="abs" style="left:219px;top:453px;width:29px;height:30px;background:#fdfdfc;border:1px solid #dbe2ea;border-left:none"></div>
<svg class="ico" style="left:224px;top:459px" width="18" height="17" viewBox="0 0 18 17"><path d="M1 1.3l2.7 2.5 2.7-2.5" fill="none" stroke="#222" stroke-width="1.3"/><path d="M3.6 5.5v11" stroke="#333" stroke-width="1.3"/><path d="M8 2.2h9M6 11.2h11" stroke="#9a9a9a" stroke-width="1.3"/><path d="M6 6.5h11M6 15.5h11" stroke="#222" stroke-width="1.3"/></svg>
<!-- view cube -->
<svg class="ico" style="left:1440px;top:75px" width="160" height="150" viewBox="1440 75 160 150">
<g fill="#dde6ee">
<path d="M1519.2 82.5l-6.5 7.5h13.3z"/><path d="M1519.3 214.4l-6.6-7.7h14z"/><path d="M1453.3 147.6l8.2-5.8v11.6z"/><path d="M1586 147.6l-8-5.8v11.6z"/>
<path d="M1501.5 88.5l.8 4.6c-9 2.2-16.5 7-22.5 14l3.5 3-12.3 1.2 1.8-12.4 3.4 2.9c6.8-7.6 15.3-12 25.3-13.3z"/>
<path d="M1537.8 88.5l-.8 4.6c9 2.2 16.5 7 22.5 14l-3.5 3 12.3 1.2-1.8-12.4-3.4 2.9c-6.8-7.6-15.3-12-25.3-13.3z"/>
<path d="M1485.5 132l28-20 37.2 8.4 4.1 9.1-.8 28.8-26.4 26.9-42.1-9.2z" stroke="#dde6ee" stroke-width="3" stroke-linejoin="round"/>
</g>
<g fill="#fdfdfc">
<path d="M1492 131l21.5-15 33.5 7.5-17 15.5z" stroke="#fdfdfc" stroke-width="2" stroke-linejoin="round"/>
<path d="M1489 138.5l33 9.5.5 31-33.5-7.5z" stroke="#fdfdfc" stroke-width="2" stroke-linejoin="round"/>
<path d="M1533.5 149.5l17.5-17.5v25l-17.5 20z" stroke="#fdfdfc" stroke-width="2" stroke-linejoin="round"/>
<circle cx="1527.6" cy="143.5" r="5.8"/><circle cx="1489" cy="133" r="3"/><circle cx="1552" cy="127" r="2.8"/><circle cx="1528" cy="182" r="2.8"/>
</g>
<path d="M1483.8 131v44.7" stroke="#2a4fb5" stroke-width="1.9"/>
<path d="M1483.8 175.7l43.8 13.2" stroke="#c4473e" stroke-width="1.2"/>
<path d="M1483.8 175.7l25.6-23" stroke="#a9c6a2" stroke-width=".9"/>
<text x="1478.5" y="128.5" font-family="Liberation Sans, sans-serif" font-size="11" font-weight="bold" fill="#1c3fa0">Z</text>
<text x="1531" y="195.5" font-family="Liberation Sans, sans-serif" font-size="11" fill="#c0392f">X</text>
<text x="1509.5" y="153.5" font-family="Liberation Sans, sans-serif" font-size="9" fill="#c2cbd3">Y</text>
<text transform="matrix(0.970 0.240 -0.080 1 1494.5 159.5)" font-family="Liberation Sans, sans-serif" font-size="10.5" fill="#1a1a1a">Front</text>
<text transform="matrix(0.9 0.290 -0.650 0.550 1513.5 123.5)" font-family="Liberation Sans, sans-serif" font-size="10" fill="#222">Top</text>
<text transform="matrix(0.560 -0.640 0.050 1 1538.5 163.5)" font-family="Liberation Sans, sans-serif" font-size="8.5" fill="#222">Right</text>
<g stroke="#4a4a4a" stroke-width=".9" stroke-linejoin="round"><path d="M1552.8 203l7.4-3 7.3 2.2v8.8l-7.3 3.7-7.4-3.2z" fill="#d6d6d6"/><path d="M1560.2 205.5v9.2l7.3-3.7v-8.8z" fill="#8e8e8e"/><path d="M1552.8 203l7.4-3 7.3 2.2-7.3 3.3z" fill="#f6f6f6"/></g>
<path d="M1575.2 205h7l-3.5 3.8z" fill="#222"/>
</svg>

<!-- right boxes -->
<div class="rbox" style="top:359px;height:90px">
<div><svg class="ico" style="left:7px;top:6px" width="17" height="17" viewBox="0 0 17 17"><rect x="1" y="1.5" width="15" height="14" rx="2" fill="#fff" stroke="#222" stroke-width="1.3"/><path d="M4 5h9M6 8.5h7M6 12h7" stroke="#222" stroke-width="1.5"/></svg></div>
<div><svg class="ico" style="left:5px;top:4px" width="21" height="21" viewBox="0 0 21 21"><path d="M5.5 10l6.5-3 7 2.5v7l-7 3.5-6.5-3zM5.5 10l6.5 3 7-3.5M12 13v7" fill="#fff" stroke="#222" stroke-width="1.2" stroke-linejoin="round"/><rect x="1" y="1" width="8.5" height="7" fill="#2f5fc4"/><path d="M1 3.3h8.5M1 5.7h8.5M3.8 1v7M6.7 1v7" stroke="#b6c9f0" stroke-width=".6"/></svg></div>
<div style="border-bottom:none"><svg class="ico" style="left:5px;top:5px" width="21" height="21" viewBox="0 0 21 21"><rect x="1.5" y="1.5" width="5" height="5" rx="1" fill="#bbb" stroke="#444" stroke-width="1"/><path d="M4 7v3.5h4" fill="none" stroke="#2f5fc4" stroke-width="1.3" stroke-dasharray="2 1.2"/><path d="M8.5 12.5h4v-3.5l2-1.5h4v8.5l-2 2.5h-8z" fill="#fff" stroke="#333" stroke-width="1.1" stroke-linejoin="round"/><path d="M12.5 12.5l2.5-.5M8.5 16.5h8v-6" fill="none" stroke="#333" stroke-width=".9"/></svg></div>
</div>
<div class="rbox" style="top:456.5px;height:119.5px">
<div><svg class="ico" style="left:5px;top:4px" width="21" height="21" viewBox="0 0 21 21"><rect x=".5" y=".5" width="20" height="20" rx="2.5" fill="#f0f0f0" stroke="#cfcfcf"/><path d="M3.5 4.5h14M10 7.5h6M3.5 10.5h12M10 13.5h6M3.5 16.5h14" stroke="#4f7fd6" stroke-width="1.4"/></svg></div>
<div><svg class="ico" style="left:5px;top:4px" width="21" height="21" viewBox="0 0 21 21"><rect x=".5" y=".5" width="20" height="20" rx="2.5" fill="#f0f0f0" stroke="#cfcfcf"/><path d="M3 4.5l2-1.5h11.5l1.5 1.5v11l-2.5 2.5h-11l-1.5-1.5z" fill="#9dbcf0" stroke="#1c3a80" stroke-width="1" stroke-linejoin="round"/><rect x="3" y="3" width="10.5" height="10.5" rx="1" fill="#2b50a2" stroke="#1c3a80" stroke-width=".8"/></svg></div>
<div><svg class="ico" style="left:5px;top:4px" width="21" height="21" viewBox="0 0 21 21"><rect x=".5" y=".5" width="20" height="20" rx="2.5" fill="#f0f0f0" stroke="#cfcfcf"/><rect x="3" y="4.5" width="15" height="13" rx="1.5" fill="#dbe6fa" stroke="#1c3f96" stroke-width="1.4"/><path d="M3 5h15v4h-15z" fill="#1c3f96"/><path d="M6.5 2v4M14.5 2v4" stroke="#1c3f96" stroke-width="1.8"/><path d="M7 13l2.5 2.5 4.5-4.5" fill="none" stroke="#1c3f96" stroke-width="1.5"/></svg></div>
<div style="border-bottom:none"><svg class="ico" style="left:5px;top:4px" width="21" height="21" viewBox="0 0 21 21"><rect x=".5" y=".5" width="20" height="20" rx="2.5" fill="#f0f0f0" stroke="#cfcfcf"/><g fill="none" stroke-width="3.6"><path d="M6 5a7 7 0 0 1 9 0" stroke="#6aa84f"/><path d="M16.5 6.5a7 7 0 0 1 0 8" stroke="#4a90d9"/><path d="M15 16a7 7 0 0 1-9 0" stroke="#e69138"/><path d="M4.5 14.5a7 7 0 0 1 0-8" stroke="#cc4125"/></g></svg></div>
</div>

<!-- bottom right icons -->
<svg class="ico" style="left:1543px;top:861px" width="17" height="13" viewBox="0 0 17 13"><ellipse cx="10" cy="4.5" rx="5.5" ry="3" fill="#fff" stroke="#333" stroke-width="1.2"/><ellipse cx="10" cy="4.5" rx="2" ry="1" fill="#333"/><path d="M4.5 4.5v4c0 1.5 2.5 3 5.5 3s5.5-1.5 5.5-3v-4" fill="none" stroke="#333" stroke-width="1.2"/><path d="M1 8h6v4h-6z" fill="#fff" stroke="#333" stroke-width="1.1"/><path d="M2.5 9.5v2.5M4 9.5v2.5M5.5 9.5v2.5" stroke="#333" stroke-width=".7"/></svg>
<svg class="ico" style="left:1575px;top:861.5px" width="14.5" height="13.5" viewBox="0 0 16 15"><path d="M8 1v11M2 3h12M1.5 13.5h13" stroke="#222" stroke-width="1.5"/><path d="M1 9l2.5-6 2.5 6zM10 9l2.5-6 2.5 6z" fill="none" stroke="#222" stroke-width="1.1"/><path d="M1 9h5M10 9h5" stroke="#222" stroke-width="1.6"/></svg>

<!-- cursor -->
<svg class="ico" style="left:585px;top:89px" width="12" height="17" viewBox="0 0 12 17"><path d="M1.5 1.5v11.5l2.8-2.6 2 4.8 1.9-.8-2-4.7 3.8-.2z" fill="#111" stroke="#fff" stroke-width="1" stroke-linejoin="round"/></svg>

<!-- tabs -->
<div id="tabs">
<svg class="ico" style="left:6.3px;top:6px" width="16" height="16" viewBox="0 0 16 16"><path d="M8 1.5v13M1.5 8h13" stroke="#444" stroke-width="2.3"/></svg>
<div class="abs" style="left:35px;top:0;width:1529px;height:28px;background:#cfcfcf"></div>
<div class="tab" style="left:35.0px;width:102.3px"><svg width="17" height="17" viewBox="0 0 17 17"><use href="#icPS"/></svg><span>Solar Panel</span></div>
<div class="tab" style="left:137.3px;width:127.3px"><svg width="17" height="17" viewBox="0 0 17 17"><use href="#icPS"/></svg><span>Beam Structure</span></div>
<div class="tab" style="left:264.6px;width:123.3px"><svg width="17" height="17" viewBox="0 0 17 17"><use href="#icPS"/></svg><span>Base Structure</span></div>
<div class="tab" style="left:387.9px;width:102.5px;background:#fdfdfc;color:#222;border-top-color:#fdfdfc;border-bottom:2.5px solid #2a5bbf;border-radius:0 0 3px 3px;height:26.5px"><svg width="17" height="17" viewBox="0 0 17 17"><use href="#icAsm"/></svg><span>Assembly 1</span></div>
<div class="tab" style="left:490.4px;width:152.1px"><svg width="17" height="17" viewBox="0 0 17 17"><use href="#icAsm"/></svg><span>Top Level Assembly</span></div>
<div class="tab" style="left:642.5px;width:84.0px"><svg width="18" height="17" viewBox="0 0 18 17"><g fill="none" stroke="#111" stroke-width="2.2" stroke-linecap="round"><path d="M7.5 10.5a3.2 3.2 0 0 0 4.6 0l3-3a3.2 3.2 0 0 0-4.6-4.6l-1 1"/><path d="M10.5 6.5a3.2 3.2 0 0 0-4.6 0l-3 3a3.2 3.2 0 0 0 4.6 4.6l1-1"/></g></svg><span style="left:29px">Link tab</span></div>
<div class="tab" style="left:726.5px;width:123.5px"><svg width="17" height="17" viewBox="0 0 17 17"><use href="#icAsm"/></svg><span>Base Structure</span></div>
<div class="tab" style="left:850.0px;width:151.5px"><svg width="16" height="15.5" viewBox="0 0 18 17" style="top:5px"><use href="#icDrw"/></svg><span>Top Level Assembly</span></div>
<div class="tab" style="left:1001.5px;width:172.5px"><svg width="17" height="17" viewBox="0 0 17 17"><rect x="1" y="1" width="15" height="15" rx="1.5" fill="#fff" stroke="#222" stroke-width="1.3"/><path d="M3.5 12.5c2-1 4-4 4.5-7.5.3-1.5-1-1.5-.8 0 .5 3 3 5.5 6 6 1.3.2 1-1-.5-.8-2.5.2-6 1-9.2 2.3z" fill="none" stroke="#222" stroke-width="1"/></svg><span>Top Level Assembly.pdf</span></div>
<div class="tab" style="left:1174.0px;width:115.5px"><svg width="16" height="15.5" viewBox="0 0 18 17" style="top:5px"><use href="#icDrw"/></svg><span>Electrical Box</span></div>
<div class="tab" style="left:1289.5px;width:99.0px"><svg width="17" height="16" viewBox="0 0 18 17" style="top:4.5px"><use href="#icFld"/></svg><span>Simulation</span></div>
<div class="tab" style="left:1388.5px;width:165.5px"><svg width="17" height="16" viewBox="0 0 18 17" style="top:4.5px"><use href="#icFld"/></svg><span>Electronic Components</span></div>
<div class="abs" style="left:1509px;top:0;width:12px;height:26px;background:linear-gradient(90deg,rgba(0,0,0,0),rgba(0,0,0,.13))"></div><div class="abs" style="left:1521px;top:0;width:43px;height:28px;background:#d1d1d1"></div>
<svg class="ico" style="left:1526px;top:6px" width="10" height="14" viewBox="0 0 10 14"><path d="M8 1.5l-5.5 5.5 5.5 5.5" fill="none" stroke="#bdbdbd" stroke-width="2"/></svg>
<svg class="ico" style="left:1549px;top:6px" width="10" height="14" viewBox="0 0 10 14"><path d="M2 1.5l5.5 5.5-5.5 5.5" fill="none" stroke="#444" stroke-width="2"/></svg>
<div class="abs" style="left:1560px;top:24px;width:4px;height:4px;background:radial-gradient(circle at 0 0,rgba(17,17,17,0) 3.3px,#111 4px)"></div>
</div>
<svg width="0" height="0" style="position:absolute"><defs>
<g id="icPS"><path d="M1.5 7l2-1.8h3l1.5 1.8v8.5h-6.5zM8 3.5l2-2h3.5l2 2v12h-7.5z" fill="#fff" stroke="#333" stroke-width="1.1" stroke-linejoin="round"/><path d="M6 5.5v10M13 1.5v14" stroke="#333" stroke-width="1"/></g>
<g id="icAsm"><rect x="4.5" y="4.5" width="11" height="11" rx="1.8" fill="#fff" stroke="#444" stroke-width="1"/><rect x="1.5" y="1.5" width="11" height="11" rx="1.8" fill="#fff" stroke="#444" stroke-width="1"/><rect x="3.3" y="3.3" width="7.4" height="7.4" rx=".5" fill="#7c7c7c"/></g>
<g id="icDrw"><rect x="1" y="1.5" width="16" height="14" fill="#fff" stroke="#222" stroke-width="1.4"/><path d="M10.5 15.5v-4h6.5" fill="none" stroke="#222" stroke-width="1.3"/></g>
<g id="icFld"><path d="M1 14.5v-12h5.5l1.5 2h9v10z" fill="#fff" stroke="#333" stroke-width="1.2" stroke-linejoin="round"/></g>
</defs></svg>
</body></html>
